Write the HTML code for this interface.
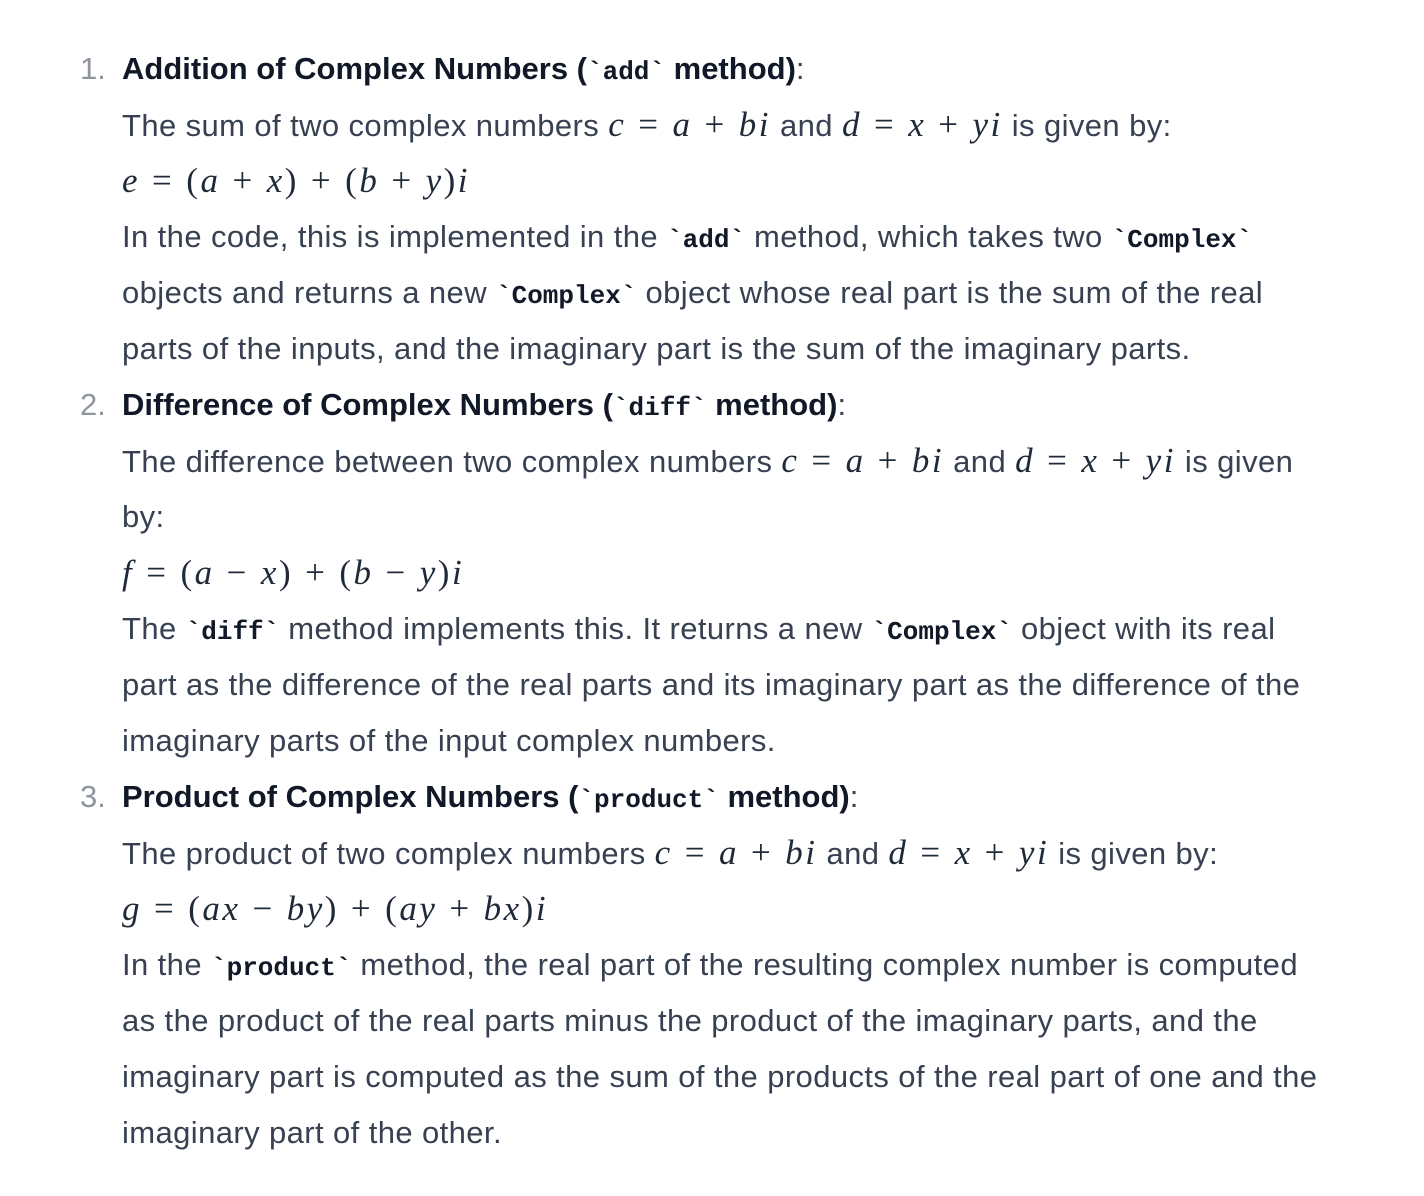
<!DOCTYPE html>
<html><head><meta charset="utf-8"><style>
body{margin:0;background:#fff;width:1424px;height:1196px;overflow:hidden;font-family:"Liberation Sans",sans-serif;color:#374151;font-size:31px;letter-spacing:0.4px}
.l{position:absolute;left:122px;height:56px;line-height:56px;white-space:nowrap}
.n{position:absolute;left:80px;color:#8e959e;height:56px;line-height:56px;letter-spacing:0}
b{color:#111827;letter-spacing:0}
code{font-family:"Liberation Mono",monospace;font-weight:bold;font-size:26px;color:#111827;letter-spacing:0}
.m{font-family:"Liberation Serif",serif;font-style:italic;font-size:35px;letter-spacing:2.5px;color:#1f2937}
.m .r{font-style:normal}
.m .o{font-style:normal;margin:0 12px}
</style></head><body>
<div class="n" style="top:41px">1.</div>
<div class="l" style="top:41px"><b>Addition of Complex Numbers (<code>`add`</code> method)</b>:</div>
<div class="l" style="top:97px">The sum of two complex numbers <span class="m">c<span class="o">=</span>a<span class="o">+</span>bi</span> and <span class="m">d<span class="o">=</span>x<span class="o">+</span>yi</span> is given by:</div>
<div class="l" style="top:153px"><span class="m">e<span class="o">=</span><span class="r">(</span>a<span class="o">+</span>x<span class="r">)</span><span class="o">+</span><span class="r">(</span>b<span class="o">+</span>y<span class="r">)</span>i</span></div>
<div class="l" style="top:209px">In the code, this is implemented in the <code>`add`</code> method, which takes two <code>`Complex`</code></div>
<div class="l" style="top:265px">objects and returns a new <code>`Complex`</code> object whose real part is the sum of the real</div>
<div class="l" style="top:321px">parts of the inputs, and the imaginary part is the sum of the imaginary parts.</div>
<div class="n" style="top:377px">2.</div>
<div class="l" style="top:377px"><b>Difference of Complex Numbers (<code>`diff`</code> method)</b>:</div>
<div class="l" style="top:433px">The difference between two complex numbers <span class="m">c<span class="o">=</span>a<span class="o">+</span>bi</span> and <span class="m">d<span class="o">=</span>x<span class="o">+</span>yi</span> is given</div>
<div class="l" style="top:489px">by:</div>
<div class="l" style="top:545px"><span class="m">f<span class="o">=</span><span class="r">(</span>a<span class="o">−</span>x<span class="r">)</span><span class="o">+</span><span class="r">(</span>b<span class="o">−</span>y<span class="r">)</span>i</span></div>
<div class="l" style="top:601px">The <code>`diff`</code> method implements this. It returns a new <code>`Complex`</code> object with its real</div>
<div class="l" style="top:657px">part as the difference of the real parts and its imaginary part as the difference of the</div>
<div class="l" style="top:713px">imaginary parts of the input complex numbers.</div>
<div class="n" style="top:769px">3.</div>
<div class="l" style="top:769px"><b>Product of Complex Numbers (<code>`product`</code> method)</b>:</div>
<div class="l" style="top:825px">The product of two complex numbers <span class="m">c<span class="o">=</span>a<span class="o">+</span>bi</span> and <span class="m">d<span class="o">=</span>x<span class="o">+</span>yi</span> is given by:</div>
<div class="l" style="top:881px"><span class="m">g<span class="o">=</span><span class="r">(</span>ax<span class="o">−</span>by<span class="r">)</span><span class="o">+</span><span class="r">(</span>ay<span class="o">+</span>bx<span class="r">)</span>i</span></div>
<div class="l" style="top:937px">In the <code>`product`</code> method, the real part of the resulting complex number is computed</div>
<div class="l" style="top:993px">as the product of the real parts minus the product of the imaginary parts, and the</div>
<div class="l" style="top:1049px">imaginary part is computed as the sum of the products of the real part of one and the</div>
<div class="l" style="top:1105px">imaginary part of the other.</div>
</body></html>
